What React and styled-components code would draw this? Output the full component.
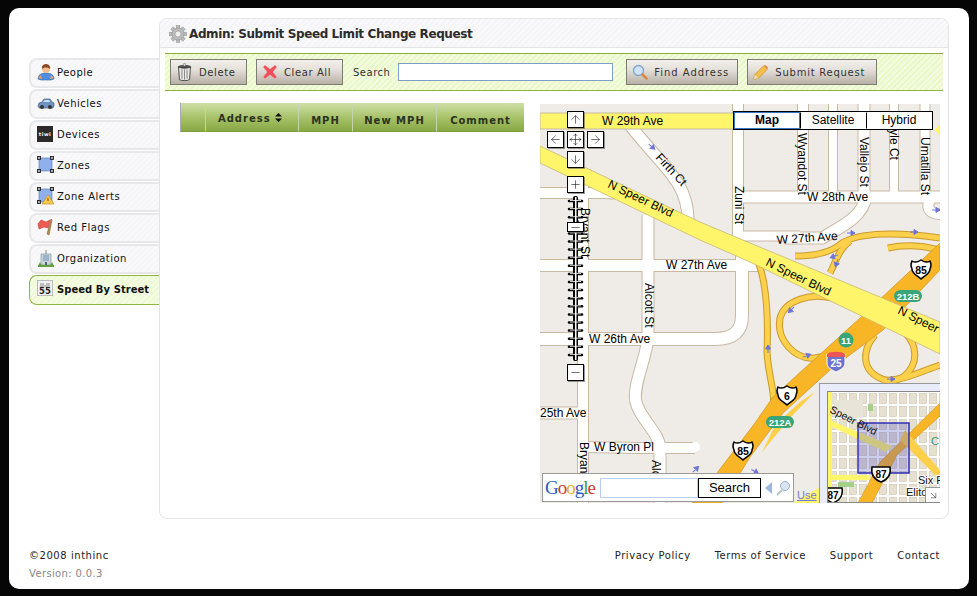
import React from 'react';
import styled, { createGlobalStyle } from 'styled-components';
import { ArrowUp, ArrowDown, ArrowLeft, ArrowRight, Plus, Minus, Move, ArrowDownRight } from 'lucide-react';

const Global = createGlobalStyle`
  html, body { margin: 0; padding: 0; background: #060606; }
  body { font-family: "DejaVu Sans", Verdana, sans-serif; width: 977px; height: 596px; overflow: hidden; }
`;
const stripes = (a, b) => `repeating-linear-gradient(135deg, ${a} 0 2px, ${b} 2px 4px)`;

const Shell = styled.div`
  margin: 8px 8px 0 9px; width: 960px; height: 581px; background: #fff; border-radius: 10px;
  display: flex; flex-direction: column; box-sizing: border-box; padding: 10px 20px 0;
`;
const Main = styled.div`display: flex; align-items: flex-start; height: 501px;`;
const Sidebar = styled.nav`width: 130px; padding-top: 40px; display: flex; flex-direction: column; gap: 1px; flex: none;`;
const Item = styled.div`
  height: 30px; box-sizing: border-box; display: flex; align-items: center; gap: 2px; padding: 0 0 2px ${p => p.$active ? 7 : 6}px;
  border: ${p => p.$active ? '1px solid #8fb63e' : '2px solid #e8e7ea'}; border-right: none; border-radius: 8px 0 0 8px;
  margin-right: ${p => p.$active ? '-1px' : '0'};
  background: ${p => p.$active ? stripes('#f4fde2', '#eefad6') : stripes('#faf9fa', '#f6f5f7')};
  color: #111; font-size: 10px; letter-spacing: ${p => p.$active ? 0.05 : 0.5}px; font-weight: ${p => p.$active ? 700 : 400};
`;
const IconSlot = styled.span`width: 18px; height: 18px; display: block; flex: none; & > svg { display: block; }`;
const TiwiIcon = styled.span`
  width: 16px; height: 16px; background: #2c2a28; color: #fff; font: 700 5px "DejaVu Sans", sans-serif;
  display: flex; align-items: center; justify-content: center; margin-right: 2px;
`;
const Panel = styled.section`
  width: 790px; height: 501px; box-sizing: border-box; border: 1px solid #e4e4e4; border-radius: 8px; background: #fff; flex: none; overflow: hidden;
`;
const TitleBar = styled.header`
  height: 29px; box-sizing: border-box; border-bottom: 1px solid #e4e4e4; background: ${stripes('#f9f8fa', '#f5f4f6')};
  display: flex; align-items: center; gap: 2px; padding: 1px 0 0 9px;
`;
const Title = styled.h1`margin: 0; font: 700 12px "DejaVu Sans", sans-serif; color: #2c2c2c; letter-spacing: -0.4px;`;
const Toolbar = styled.div`
  margin: 5px 5px 0; height: 38px; box-sizing: border-box; border-top: 1px solid #8fae42; border-bottom: 1px solid #8fb63e;
  background: ${stripes('#f4fcdf', '#e9f8c8')}; display: flex; align-items: center; padding: 0 0 0 5px;
`;
const Btn = styled.button`
  width: ${p => p.$w}px; height: 26px; margin-right: ${p => p.$mr}px; box-sizing: border-box; border: 1px solid #7d7d78; padding: 0 0 0 5px;
  background: linear-gradient(#f3f0ec, #e4e0da 40%, #b7b0a5); color: #333; display: flex; align-items: center; gap: 6px;
  font: 400 10px "DejaVu Sans", sans-serif; letter-spacing: ${p => p.$ls || 0.6}px;
`;
const SearchLabel = styled.label`font-size: 10px; letter-spacing: 0.5px; color: #333; margin-right: 8px;`;
const SearchInput = styled.input`
  width: 215px; height: 18px; box-sizing: border-box; border: 1px solid #7b9fc9; background: #fff; margin-right: 13px; padding: 0;
`;
const Content = styled.div`display: flex; align-items: flex-start; padding: 12px 0 0 20px; gap: 16px;`;
const Table = styled.table`
  width: 344px; height: 29px; border-collapse: separate; border-spacing: 0; table-layout: fixed; flex: none;
`;
const Th = styled.th`
  width: ${p => p.$w}px; height: 29px; padding: ${p => p.$up ? '2px 4px 0 0' : '6px 0 0'}; box-sizing: border-box;
  background: linear-gradient(#cfe0a8, #a5c066 55%, #88a844); border-right: 1px solid #c8d2b0; border-bottom: 1px solid #7f9e3e;
  font: 700 10px "DejaVu Sans", sans-serif; letter-spacing: 1px; color: #2b3320;
  &:first-child { border-left: 1px solid #aab; } &:last-child { border-right: none; }
`;
const MapBox = styled.div`position: relative; width: 400px; height: 399px; margin-top: 1px; overflow: hidden; background: #efebe7; flex: none;`;
const MapSvg = styled.svg`display: block; font-family: "Liberation Sans", Arial, sans-serif;`;
const OverviewSvg = styled.svg`display: block; font-family: "Liberation Sans", Arial, sans-serif;`;
const Ctl = styled.div`
  position: absolute; left: ${p => p.$x}px; top: ${p => p.$y}px; width: 15px; height: ${p => p.$h || 15}px; border: 1px solid #000; background: #fff;
  box-shadow: 1px 1px 0 rgba(90,90,90,.6); display: flex; align-items: center; justify-content: center; color: #000;
`;
const TypeBar = styled.div`position: absolute; left: 193px; top: 7px; display: flex; border: 1px solid #000; background: #fff;`;
const TypeBtn = styled.div`
  width: 66px; height: 17px; box-sizing: border-box; text-align: center; font: ${p => p.$on ? 700 : 400} 12px/15px "Liberation Sans", sans-serif; color: #000;
  border: 1px solid ${p => p.$on ? '#3a76c4' : 'transparent'}; border-left: ${p => p.$first ? '' : '1px solid #000'};
`;
const SearchBox = styled.div`
  position: absolute; left: 2px; top: 369px; width: 252px; height: 29px; box-sizing: border-box; border: 1px solid #9a9a9a; background: #fff;
  display: flex; align-items: center; padding-left: 2px;
`;
const GoogleLogo = styled.span`font: 400 19px/1 "Liberation Serif", serif; letter-spacing: -1px; width: 55px; flex: none;`;
const Letter = styled.span`color: ${p => p.$c};`;
const GInput = styled.div`width: 98px; height: 20px; box-sizing: border-box; border: 1px solid #b9cff2; background: #fff;`;
const GButton = styled.div`width: 63px; height: 20px; box-sizing: border-box; border: 1px solid #000; font: 400 13px/18px "Liberation Sans", sans-serif; text-align: center; color: #000; margin-right: 4px;`;
const UseLink = styled.a`position: absolute; left: 257px; top: 385px; font: 400 11px "Liberation Sans", sans-serif; color: #7a7ad8; text-decoration: underline;`;
const Overview = styled.div`
  position: absolute; left: 279px; top: 279px; width: 121px; height: 120px; box-sizing: border-box; background: #e9edfb; border: 1px solid #999; border-right: none; border-bottom: none; padding: 7px 0 0 7px;
`;
const OverviewMap = styled.div`position: relative; width: 113px; height: 112px; border: 1px solid #888; border-right: none; box-sizing: border-box; overflow: hidden; background: #e8e4d8;`;
const Resize = styled.div`position: absolute; right: 0; bottom: 0; width: 14px; height: 14px; background: #fff; border-left: 1px solid #999; border-top: 1px solid #999; display: flex; align-items: center; justify-content: center;`;
const Footer = styled.footer`display: flex; justify-content: space-between; padding: 31px 9px 0 0; font-size: 10px; letter-spacing: 0.55px; color: #222;`;
const Legal = styled.div`display: flex; flex-direction: column; gap: 7px;`;
const Version = styled.span`color: #888; letter-spacing: 0.35px;`;
const Links = styled.div`display: flex; gap: 24px;`;
const FooterLink = styled.a`color: #222; text-decoration: none;`;

const Person = () => <svg width="18" height="18" viewBox="0 0 18 18"><path d="M1 16c0-4 3-6 8-6s8 2 8 6l-3 1H4z" fill="#4d8fe0" stroke="#2b62a8" strokeWidth=".6"/><path d="M1 15l3-3 1 4zM17 15l-3-3-1 4z" fill="#e8a070"/><circle cx="9" cy="6" r="4" fill="#f2bd92"/><path d="M5 6c-1-4 3-5 4-5s5 1 4 5c-2-2-6-2-8 0z" fill="#8a4a22"/></svg>;
const Car = () => <svg width="18" height="18" viewBox="0 0 18 18"><path d="M1 12l1-3 3-1 2-3h6l2 3 2 1v3l-1 2H2z" fill="#6f94c4" stroke="#3f5f88" strokeWidth=".7"/><path d="M6 8l2-2h4l1 2z" fill="#cfe0f2"/><circle cx="5" cy="13" r="2" fill="#333"/><circle cx="13" cy="13" r="2" fill="#333"/></svg>;
const ZoneIco = ({ alert }) => <svg width="18" height="18" viewBox="0 0 18 18"><rect x="2" y="2" width="13" height="13" fill="#8fb0ec" stroke="#5577aa" strokeWidth=".6"/>{[[2,2],[15,2],[2,15],[15,15]].map(([x,y],i)=>(alert && i===3)?null:<rect key={i} x={x-1.5} y={y-1.5} width="3" height="3" fill="#aaa" stroke="#222" strokeWidth=".9"/>)}{alert && <><path d="M11 8l6 9H5z" fill="#f6c94a" stroke="#c89028" strokeWidth=".7"/><path d="M11 11v3" stroke="#a05a10" strokeWidth="1.2"/></>}</svg>;
const Flag = () => <svg width="18" height="18" viewBox="0 0 18 18"><path d="M1 6l3-4 5 2 4-2-2 8-4-1-5 2z" fill="#ee5b52" stroke="#c83a30" strokeWidth=".6"/><path d="M14 1l1 1-3 15-2-1z" fill="#b78a4a" stroke="#7a5626" strokeWidth=".5"/></svg>;
const Org = () => <svg width="18" height="18" viewBox="0 0 18 18"><path d="M4 5h10v11H4z" fill="#c8d4dc" stroke="#7a8a94" strokeWidth=".6"/><path d="M9 1v4" stroke="#888"/><path d="M6 7h6M6 9h6M6 11h6" stroke="#6f94b8"/><path d="M8 13h2v3H8z" fill="#567"/><path d="M1 17l2-4 2 4zM13 17l2-4 2 4zM1 16h16v2H1z" fill="#62a040"/></svg>;
const Speed = () => <svg width="18" height="18" viewBox="0 0 18 18"><rect x=".5" y=".5" width="15" height="15" fill="#f2f2f2" stroke="#bbb"/><path d="M3 4h4M9 4h4M3 6h10" stroke="#888" strokeWidth="1"/><text x="8" y="14" textAnchor="middle" fontSize="8.5" fontFamily="DejaVu Sans" fill="#222" fontWeight="700">55</text></svg>;
const Gear = () => <svg width="18" height="18" viewBox="0 0 18 18"><g fill="#bbb" stroke="#8f8f8f" strokeWidth=".5">{[0,45,90,135,180,225,270,315].map(a=><rect key={a} x="7.2" y="0.5" width="3.6" height="4" transform={`rotate(${a} 9 9)`}/>)}<circle cx="9" cy="9" r="6"/></g><circle cx="9" cy="9" r="3" fill="#eee" stroke="#999" strokeWidth=".6"/></svg>;
const Trash = () => <svg width="17" height="22" viewBox="0 0 20 22"><ellipse cx="10" cy="5" rx="8" ry="2.500" fill="#555"/><path d="M3 5l1 15c2 1.500 10 1.500 12 0l1-15c-3 2-11 2-14 0z" fill="#e8e8e4" stroke="#333"/><path d="M7 8v11M10 8v12M13 8v11" stroke="#777"/><path d="M9 1h2v3H9z" fill="#eee" stroke="#555" strokeWidth=".5"/></svg>;
const RedX = () => <svg width="16" height="16" viewBox="0 0 16 16"><path d="M3 1l5 4 5-4 2 2-4 5 4 5-2 2-5-4-5 4-2-2 4-5-4-5z" fill="#f0505a" stroke="#d8d0c8" strokeWidth=".5"/></svg>;
const Lens = () => <svg width="16" height="16" viewBox="0 0 16 16"><circle cx="6.500" cy="6.500" r="5" fill="#cfe2f6" stroke="#7fa4cc" strokeWidth="1.300"/><path d="M10.500 10.500l4 4" stroke="#d88a3c" strokeWidth="2.500" strokeLinecap="round"/></svg>;
const Pencil = () => <svg width="16" height="16" viewBox="0 0 18 18"><path d="M1 17l1-5L12 2l4 4L6 16z" fill="#f4c04a" stroke="#c88a28" strokeWidth=".8"/><path d="M1 17l1-5 4 4z" fill="#f0dcb0"/><path d="M12 2l4 4 1-2-3-3z" fill="#e88a5a"/></svg>;

const nav = [
  ['People', <Person />], ['Vehicles', <Car />], ['Devices', <TiwiIcon>tiwi</TiwiIcon>], ['Zones', <ZoneIco />],
  ['Zone Alerts', <ZoneIco alert />], ['Red Flags', <Flag />], ['Organization', <Org />], ['Speed By Street', <Speed />],
];

const whiteRoads = [
  ['M583 185V503', 10], ['M540 193H605Q622 195 628 187', 10], ['M540 265.500H760', 11], ['M540 339H715C735 339 742 330 742 315V255', 12],
  ['M540 413H583', 11], ['M583 447L640 448H695', 10], ['M648 215V335C648 355 632 385 636 402C640 420 660 432 660 450V503', 11],
  ['M630 125C660 165 688 180 688 220', 11], ['M738 104V240', 10], ['M803 104V200', 10], ['M833 104V196', 8], ['M864 104V196', 11], ['M894 104V200', 8], ['M925 104V196', 9],
  ['M738 197H940', 11], ['M866 196C864 215 845 225 822 238L785 238', 11], ['M738 236H800', 9], ['M930 200C925 210 932 214 940 214', 10],
];
const ramps = [
  'M832 298C810 293 785 300 780 318C776 340 795 360 815 358C825 357 832 353 838 345',
  'M875 335C862 350 860 372 885 380C905 384 918 365 914 348C912 340 908 335 902 330',
  'M883 380C900 382 920 372 940 365',
  'M758 262C768 285 768 330 767 352C768 375 776 395 773 405C770 415 762 425 755 435',
  'M795 256C815 256 832 252 842 243C860 232 900 232 940 238',
  'M830 273C836 262 838 250 850 241',
  'M888 248C905 244 925 246 940 250',
];
const labels = [
  ['W 29th Ave', 602, 125, 0], ['N Speer Blvd', 607, 187, 25.500], ['Firth Ct', 655, 158, 47], ['W 27th Ave', 666, 269, 0],
  ['Bryant St', 581, 208, 90], ['Alcott St', 645, 283, 90], ['Zuni St', 735, 186, 90], ['Wyandot St', 798, 133, 90], ['Vallejo St', 860, 137, 90],
  ['Lyle Ct', 890, 123, 90], ['Umatilla St', 921, 137, 90], ['W 28th Ave', 807, 201, 0], ['W 27th Ave', 777, 244, -4], ['N Speer Blvd', 765, 265, 26],
  ['N Speer', 897, 313, 27], ['W 26th Ave', 589, 343, 0], ['25th Ave', 540, 417, 0], ['W Byron Pl', 594, 451, 0], ['Bryant', 580, 442, 90], ['Alcott', 652, 460, 90],
];
const arrows = [[651,146,-140],[792,309,-45],[806,356,160],[768,350,90],[835,256,-20],[837,262,-70],[890,379,180],[913,232,180],[850,233,180],[935,210,180],[739,450,135],[754,471,-150],[695,470,135]];

const Shield = ({ x, y, t, s = 1 }) => (
  <g transform={`translate(${x} ${y}) scale(${s})`}>
    <path d="M-9-9c3 2 6 1 9-1c3 2 6 3 9 1c2 4 1 6 0 8c0 5-6 7-9 10c-3-3-9-5-9-10c-1-2-2-4 0-8z" fill="#fff" stroke="#000" strokeWidth="1.500"/>
    <text x="0" y="3.500" textAnchor="middle" fontSize="10.500" fontWeight="700" fill="#000">{t}</text>
  </g>
);
const Exit = ({ x, y, t, w }) => (
  <g><rect x={x - w / 2} y={y - 6} width={w} height="12" rx="6" fill="#3aa57a"/>
  <text x={x} y={y + 3.500} textAnchor="middle" fontSize="9.500" fontWeight="700" fill="#fff">{t}</text></g>
);

const MapDrawing = () => (
  <MapSvg width="400" height="399" viewBox="540 104 400 399">
    <rect x="540" y="104" width="400" height="399" fill="#efebe7"/>
    <g fill="none" strokeLinecap="butt">
      {whiteRoads.map(([d, w], i) => <path key={i} d={d} stroke="#c9b9a3" strokeWidth={w + 2}/>)}
      {whiteRoads.map(([d, w], i) => <path key={i} d={d} stroke="#fff" strokeWidth={w}/>)}
    </g>
    <circle cx="695" cy="447" r="5" fill="#fff"/>
    <path d="M935 130l5-6v12z" fill="#fef56a"/>
    <path d="M540 113H735V129H540z" fill="#fef56a" stroke="#c9b9a3"/>
    <g fill="none">
      {ramps.map((d, i) => <path key={i} d={d} stroke="#c99a2e" strokeWidth="7"/>)}
      {ramps.map((d, i) => <path key={i} d={d} stroke="#fcd04a" strokeWidth="5"/>)}
    </g>
    <path d="M940 243V270L883 330L830 370L783 413L750 457L722 503H692L717 473L755 423L773 397L860 318Z" fill="#f8b526" stroke="#d09a2c" strokeWidth=".8"/>
    <path d="M775 425L800 402L815 392L790 418L762 452L768 440Z" fill="#fcd04a"/>
    <path d="M793 503L820 487V503Z" fill="#fef56a"/>
    <path d="M540 146L700 222L750 243L940 322V354L750 262L700 240L540 163Z" fill="#fef56a" stroke="#c8b878" strokeWidth=".8"/>
    <g fill="#000" fontSize="12">
      {labels.map(([t, x, y, r], i) => <text key={i} x={x} y={y} transform={r ? `rotate(${r} ${x} ${y})` : undefined}>{t}</text>)}
    </g>
    {arrows.map(([x, y, r], i) => <path key={i} d="M-5 0H3M-1-2.500L-5 0L-1 2.500Z" transform={`translate(${x} ${y}) rotate(${r})`} stroke="#6f74d8" fill="#6f74d8" strokeWidth="1"/>)}
    <Shield x={921} y={270} t="85"/>
    <Shield x={743} y={451} t="85"/>
    <Shield x={787} y={396} t="6"/>
    <g transform="translate(836 362)">
      <path d="M-9-8h18v9c0 5-5 7-9 9c-4-2-9-4-9-9z" fill="#6d74cc" stroke="#fff" strokeWidth="1"/>
      <path d="M-9-8c3-3 15-3 18 0v3h-18z" fill="#e55"/>
      <text x="0" y="4.500" textAnchor="middle" fontSize="10" fontWeight="700" fill="#fff">25</text>
    </g>
    <circle cx="846" cy="340" r="7.500" fill="#3aa57a"/>
    <text x="846" y="344" textAnchor="middle" fontSize="9.500" fontWeight="700" fill="#fff">11</text>
    <Exit x={908} y={296} t="212B" w={28}/>
    <Exit x={780} y={422} t="212A" w={28}/>
    <g>
      <rect x="573" y="196" width="5" height="165" rx="2" fill="#000"/>
      {Array.from({ length: 20 }, (_, i) => <path key={i} d={`M569 ${201 + i * 8.100}H582`} stroke="#000" strokeWidth="2.500" strokeLinecap="round"/>)}
      {Array.from({ length: 20 }, (_, i) => <path key={i} d={`M570 ${200.500 + i * 8.100}H581`} stroke="#fff" strokeWidth=".8"/>)}
      <rect x="575" y="197" width="1.500" height="163" fill="#fff"/>
    </g>
  </MapSvg>
);

const OverviewDrawing = () => (
  <OverviewSvg width="112" height="110" viewBox="828 392 112 110">
    <defs>
      <pattern id="blocks" width="10" height="13" patternUnits="userSpaceOnUse" patternTransform="translate(828 392)">
        <rect width="10" height="13" fill="#fff"/>
        <rect x="1.500" y="1.500" width="7" height="10" fill="#e6e0d0" stroke="#c9b9a3" strokeWidth=".5"/>
      </pattern>
    </defs>
    <rect x="827" y="391" width="113" height="112" fill="url(#blocks)"/>
    <path d="M833 400h30v18h-26z" fill="#e8e4d8"/>
    <rect x="868" y="404" width="5" height="7" fill="#a5d08a"/>
    <rect x="838" y="482" width="16" height="5" fill="#a5d08a"/>
    <path d="M827 391h5v30l60 25l-6 6l-54-25v60h-5z" fill="#fef56a"/>
    <path d="M940 403V416L897 455L872 503H858L880 462Z" fill="#f8b526" stroke="#c99a2e" strokeWidth=".6"/>
    <path d="M905 430L940 470V480L900 440z" fill="#fcd04a"/>
    <path d="M832 475H870V480H832z" fill="#fef56a"/>
    <rect x="858" y="423" width="51" height="50" fill="#4a4ac0" fillOpacity=".28" stroke="#2f2fb4" strokeWidth="1.500"/>
    <text x="829" y="412" fontSize="10.500" fill="#111" transform="rotate(27 829 412)">Speer Blvd</text>
    <g transform="translate(881 475)"><path d="M-9-8h18c1 6-1 12-9 15c-8-3-10-9-9-15z" fill="#fff" stroke="#000" strokeWidth="1.500"/><text y="3" textAnchor="middle" fontSize="10" fontWeight="700">87</text></g>
    <g transform="translate(833 496)"><path d="M-9-8h18c1 6-1 12-9 15c-8-3-10-9-9-15z" fill="#fff" stroke="#000" strokeWidth="1.500"/><text y="3" textAnchor="middle" fontSize="10" fontWeight="700">87</text></g>
    <text x="918" y="484" fontSize="11" fill="#111" stroke="#fff" strokeWidth="2" paintOrder="stroke">Six F</text>
    <text x="906" y="496" fontSize="11" fill="#111" stroke="#fff" strokeWidth="2" paintOrder="stroke">Elitc</text>
    <text x="931" y="445" fontSize="11" fill="#3a9a70">C</text>
  </OverviewSvg>
);

export default function App() {
  return (
    <>
      <Global />
      <Shell>
        <Main>
          <Sidebar>
            {nav.map(([label, icon], i) => (
              <Item key={label} $active={i === nav.length - 1}>
                {i === 2 ? icon : <IconSlot>{icon}</IconSlot>}
                {label}
              </Item>
            ))}
          </Sidebar>
          <Panel>
            <TitleBar><IconSlot><Gear /></IconSlot><Title>Admin: Submit Speed Limit Change Request</Title></TitleBar>
            <Toolbar>
              <Btn $w={77} $mr={9}><Trash />Delete</Btn>
              <Btn $w={87} $mr={10}><RedX />Clear All</Btn>
              <SearchLabel>Search</SearchLabel>
              <SearchInput />
              <Btn $w={112} $mr={9} $ls={0.95}><Lens />Find Address</Btn>
              <Btn $w={130} $mr={0} $ls={0.75}><Pencil />Submit Request</Btn>
            </Toolbar>
            <Content>
              <Table>
                <thead><tr>
                  <Th $w={26} />
                  <Th $w={93} $up>Address <svg width="7" height="9" viewBox="0 0 7 9"><path d="M3.500 0L7 3.500H0zM3.500 9L0 5.500H7z" fill="#111"/></svg></Th>
                  <Th $w={54}>MPH</Th>
                  <Th $w={84}>New MPH</Th>
                  <Th $w={87}>Comment</Th>
                </tr></thead>
              </Table>
              <MapBox>
                <MapDrawing />
                <Ctl $x={27} $y={7}><ArrowUp size={13} strokeWidth={1}/></Ctl>
                <Ctl $x={7} $y={27}><ArrowLeft size={13} strokeWidth={1}/></Ctl>
                <Ctl $x={27} $y={27}><Move size={13} strokeWidth={1}/></Ctl>
                <Ctl $x={47} $y={27}><ArrowRight size={13} strokeWidth={1}/></Ctl>
                <Ctl $x={27} $y={47}><ArrowDown size={13} strokeWidth={1}/></Ctl>
                <Ctl $x={27} $y={72}><Plus size={13} strokeWidth={1}/></Ctl>
                <Ctl $x={27} $y={118} $h={8}><Minus size={13} strokeWidth={1}/></Ctl>
                <Ctl $x={27} $y={260}><Minus size={13} strokeWidth={1}/></Ctl>
                <TypeBar>
                  <TypeBtn $on $first>Map</TypeBtn>
                  <TypeBtn>Satellite</TypeBtn>
                  <TypeBtn>Hybrid</TypeBtn>
                </TypeBar>
                <SearchBox>
                  <GoogleLogo><Letter $c="#2a5bc8">G</Letter><Letter $c="#d8392b">o</Letter><Letter $c="#e8b020">o</Letter><Letter $c="#2a5bc8">g</Letter><Letter $c="#3a9a3a">l</Letter><Letter $c="#d8392b">e</Letter></GoogleLogo>
                  <GInput />
                  <GButton>Search</GButton>
                  <svg width="27" height="16" viewBox="0 0 27 16"><path d="M7 2v12L0 8z" fill="#9fb8e0"/><circle cx="20" cy="6" r="4.500" fill="#d8e6f4" stroke="#9ab0c8"/><path d="M17 10l-5 5" stroke="#b8c4c8" strokeWidth="2"/></svg>
                </SearchBox>
                <UseLink>Use</UseLink>
                <Overview>
                  <OverviewMap>
                    <OverviewDrawing />
                    <Resize><ArrowDownRight size={11} strokeWidth={1} color="#000"/></Resize>
                  </OverviewMap>
                </Overview>
              </MapBox>
            </Content>
          </Panel>
        </Main>
        <Footer>
          <Legal><span>©2008 inthinc</span><Version>Version: 0.0.3</Version></Legal>
          <Links>
            <FooterLink>Privacy Policy</FooterLink>
            <FooterLink>Terms of Service</FooterLink>
            <FooterLink>Support</FooterLink>
            <FooterLink>Contact</FooterLink>
          </Links>
        </Footer>
      </Shell>
    </>
  );
}
